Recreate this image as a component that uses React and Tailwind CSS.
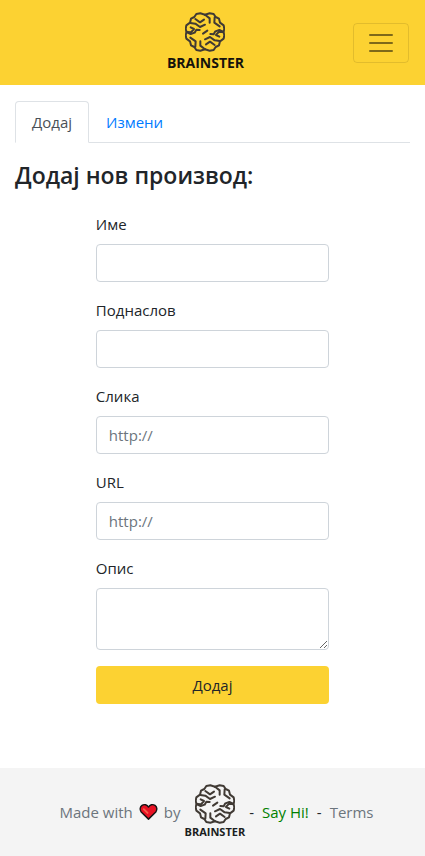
import React from "react";

function BrainFolds() {
  return (
    <>
      <path d="M60 7 L46 3 L34 5 L28 14 L18 19 L15 31 L4 39 L2 50 L5 59" />
      <path d="M60 7 L74 3 L86 5 L92 14 L102 19 L105 31 L116 39 L118 50 L115 59" />
      <path d="M31 20 L45 30 L57 22" />
      <path d="M16 32 L31 34 L45 44 L60 37" />
      <path d="M61 8 L74 18 L74 31" />
      <path d="M89 15 L88 31 L104 42" />
      <path d="M5 59 L18 60 L27 50 L17 45" />
      <path d="M115 59 L103 53 L91 57 L86 66 L76 65" />
    </>
  );
}

function Brain({ className }) {
  return (
    <svg
      viewBox="0 0 120 118"
      className={className}
      fill="none"
      stroke="#403a34"
      strokeWidth="6"
      strokeLinecap="round"
      strokeLinejoin="round"
      aria-hidden="true"
    >
      <BrainFolds />
      <g transform="rotate(180 60 59)">
        <BrainFolds />
      </g>
      <path d="M54 64 L67 55" />
    </svg>
  );
}

function Heart() {
  return (
    <svg viewBox="0 0 20 18" className="mx-[6px] h-[18px] w-[19px]" role="img" aria-label="love">
      <path
        d="M10 16.5 L2.3 9 C.5 6.800 1 3.500 3.200 2 C5.500.500 8.500 1.200 10 3.800 C11.500 1.200 14.500.500 16.800 2 C19 3.500 19.500 6.800 17.700 9 Z"
        fill="#e81224"
        stroke="#151515"
        strokeWidth="1.5"
        strokeLinejoin="round"
      />
      <path d="M5 6 L9 10" stroke="#f4604a" strokeWidth="2" strokeLinecap="round" />
    </svg>
  );
}

const fieldClass =
  "block w-full rounded border border-[#ced4da] bg-white px-3 py-[6px] leading-6 text-[#495057] placeholder:text-[#6c757d] focus:outline-none focus:border-[#80bdff]";

function Field({ id, label, placeholder, type = "text" }) {
  return (
    <div className="mb-4">
      <label htmlFor={id} className="mb-2 block">
        {label}
      </label>
      <input id={id} type={type} placeholder={placeholder} className={`${fieldClass} h-[38px]`} />
    </div>
  );
}

export default function App() {
  return (
    <div className="flex min-h-screen flex-col bg-white font-['Open_Sans','Noto_Sans',sans-serif] text-[15px] leading-6 text-[#212529]">
      <nav className="grid grid-cols-[1fr_auto_1fr] items-center bg-[#fcd232] px-4 py-3">
        <a href="#home" className="col-start-2 mr-[14px] flex flex-col items-center text-[#15130c]">
          <Brain className="h-10 w-10" />
          <span className="text-[14px] font-bold leading-[21px]">BRAINSTER</span>
        </a>
        <button
          type="button"
          aria-label="Toggle navigation"
          className="flex h-10 w-14 items-center justify-center justify-self-end rounded border border-black/10"
        >
          <svg viewBox="0 0 30 30" className="h-[30px] w-[30px]" aria-hidden="true">
            <path
              d="M4 7h22M4 15h22M4 23h22"
              stroke="#000"
              strokeOpacity=".5"
              strokeWidth="2"
              strokeLinecap="round"
              strokeMiterlimit="10"
            />
          </svg>
        </button>
      </nav>

      <main className="grow px-[15px] pt-4">
        <ul className="flex border-b border-[#dee2e6]">
          <li className="-mb-px">
            <a
              href="#add"
              className="block rounded-t border border-[#dee2e6] border-b-white bg-white px-4 py-2 text-[#495057]"
            >
              Додај
            </a>
          </li>
          <li className="-mb-px">
            <a href="#edit" className="block border border-transparent px-4 py-2 text-[#007bff]">
              Измени
            </a>
          </li>
        </ul>

        <h1 className="mt-4 mb-[21px] text-[23px] font-semibold leading-8">Додај нов производ:</h1>

        <form className="mx-auto w-2/3 px-[15px]">
          <Field id="name" label="Име" />
          <Field id="subtitle" label="Поднаслов" />
          <Field id="image" label="Слика" type="url" placeholder="http://" />
          <Field id="url" label="URL" type="url" placeholder="http://" />
          <div className="mb-4">
            <label htmlFor="description" className="mb-2 block">
              Опис
            </label>
            <textarea id="description" rows={2} className={`${fieldClass} h-[62px]`} />
          </div>
          <button type="submit" className="block h-[38px] w-full rounded bg-[#fcd232] px-3">
            Додај
          </button>
        </form>
      </main>

      <footer className="flex h-[88px] items-center justify-center bg-[#f4f4f4] pl-6 pr-4">
        <span className="text-[#6c757d]">Made with</span>
        <Heart />
        <span className="text-[#6c757d]">by</span>
        <a href="#home" className="mx-1 flex flex-col items-center text-[#1b1e21]">
          <Brain className="h-10 w-10" />
          <span className="text-[11px] font-bold leading-4">BRAINSTER</span>
        </a>
        <span>-</span>
        <a href="#contact" className="mx-2 text-[#008000]">
          Say Hi!
        </a>
        <span>-</span>
        <a href="#terms" className="ml-2 text-[#6c757d]">
          Terms
        </a>
      </footer>
    </div>
  );
}
